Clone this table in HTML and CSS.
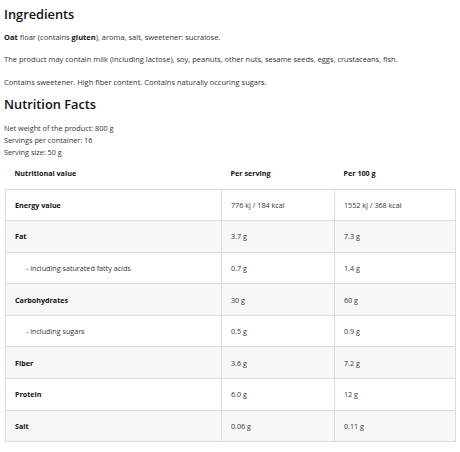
FILE: index.html
```html
<!DOCTYPE html>
<html>
<head>
<meta charset="utf-8">
<link rel="stylesheet" href="styles.css">
</head>
<body>
<div class="page">
  <h2 class="title">Ingredients</h2>
  <p class="para first"><b>Oat</b> floar (contains <b>gluten</b>), aroma, salt, sweetener: sucralose.</p>
  <p class="para">The product may contain milk (including lactose), soy, peanuts, other nuts, sesame seeds, eggs, crustaceans, fish.</p>
  <p class="para">Contains sweetener. High fiber content. Contains naturally occuring sugars.</p>
  <h2 class="title title-2">Nutrition Facts</h2>
  <div class="facts">
    <div>Net weight of the product: 800 g</div>
    <div>Servings per container: 16</div>
    <div>Serving size: 50 g</div>
  </div>
  <table class="nt">
    <colgroup><col class="c1"><col class="c2"><col class="c3"></colgroup>
    <thead>
      <tr><th>Nutritional value</th><th>Per serving</th><th>Per 100 g</th></tr>
    </thead>
    <tbody>
      <tr><td class="name">Energy value</td><td>776 kJ / 184 kcal</td><td>1552 kJ / 368 kcal</td></tr>
      <tr><td class="name">Fat</td><td>3.7 g</td><td>7.3 g</td></tr>
      <tr><td class="sub">- including saturated fatty acids</td><td>0.7 g</td><td>1.4 g</td></tr>
      <tr><td class="name">Carbohydrates</td><td>30 g</td><td>60 g</td></tr>
      <tr><td class="sub">- including sugars</td><td>0.5 g</td><td>0.9 g</td></tr>
      <tr><td class="name">Fiber</td><td>3.6 g</td><td>7.2 g</td></tr>
      <tr><td class="name">Protein</td><td>6.0 g</td><td>12 g</td></tr>
      <tr><td class="name">Salt</td><td>0.06 g</td><td>0.11 g</td></tr>
    </tbody>
  </table>
</div>
</body>
</html>
```
FILE: styles.css
```css
html, body { margin: 0; padding: 0; background: #fff; }
body { font-family: "Open Sans", "DejaVu Sans", sans-serif; color: #222; }
.page { padding: 5px 5px 0 4px; }
.title { margin: 0; font-size: 12.8px; line-height: 18px; font-weight: 600; color: #111; }
.title-2 { margin-top: 7px; }
.para { margin: 0; font-size: 7.5px; line-height: 12px; margin-top: 10.5px; color: #333; }
.para.first { margin-top: 7.5px; }
.para b { font-weight: 700; color: #111; }
.facts { margin-top: 9px; font-size: 7.3px; line-height: 12px; color: #333; }
.nt { border-collapse: collapse; width: 451px; table-layout: fixed; font-size: 7.2px; color: #333; margin-left: 1px; margin-top: 0; }
.c1 { width: 216px; }
.c2 { width: 113px; }
.c3 { width: 121px; }
.nt th { text-align: left; font-weight: 700; color: #111; height: 31px; padding: 0 0 0 9px; }
.nt td { height: 30.6px; padding: 0 0 0 9px; border: 1px solid #dcdcdc; }
.nt tbody tr:nth-child(even) td { background: #f7f7f7; }
.nt td.name { font-weight: 700; color: #111; }
.nt td.sub { padding-left: 20px; }
```
